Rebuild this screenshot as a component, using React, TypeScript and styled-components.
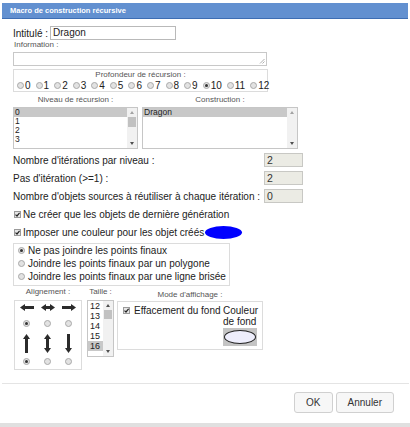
import React from "react";
import styled, { createGlobalStyle } from "styled-components";

const GlobalStyle = createGlobalStyle`
  html, body { margin: 0; padding: 0; background: #fff; }
  body { font-family: "Liberation Sans", Arial, sans-serif; color: #222; }
  * { box-sizing: border-box; }
`;

const Dialog = styled.div`
  width: 410px;
  height: 427px;
  background: #fff;
  display: flex;
  flex-direction: column;
  overflow: hidden;
`;

const TitleBar = styled.div`
  margin: 3px 2px 0 2px;
  height: 16px;
  background: #6290d0;
  border-bottom: 1px solid #3d6db3;
  color: #fff;
  font-weight: bold;
  font-size: 7.5px;
  line-height: 15px;
  padding-left: 8px;
  white-space: nowrap;
`;

const Body = styled.div`
  padding-left: 13px;
  display: flex;
  flex-direction: column;
  flex: 1;
`;

const Row = styled.div<{ $mt?: number; $h?: number; $w?: number }>`
  display: flex;
  align-items: center;
  margin-top: ${(p) => p.$mt ?? 0}px;
  height: ${(p) => (p.$h ? `${p.$h}px` : "auto")};
  width: ${(p) => (p.$w ? `${p.$w}px` : "auto")};
  font-size: 10px;
  white-space: nowrap;
`;

const MainLabel = styled.span`
  font-size: 10px;
  color: #222;
  margin-right: 2px;
`;

const TextBox = styled.div<{ $w: number; $bg?: string }>`
  width: ${(p) => p.$w}px;
  height: 14px;
  border: 1px solid #b9b9b9;
  background: ${(p) => p.$bg ?? "#fff"};
  font-size: 10px;
  line-height: 12px;
  padding-left: 2px;
  color: #222;
`;

const NumBox = styled(TextBox)`
  margin-left: auto;
  font-size: 10.5px;
  color: #333;
  border-color: #c8c8c4;
`;

const SmallLabel = styled.div<{ $center?: boolean; $pl?: number }>`
  font-size: 8px;
  line-height: 10px;
  color: #555;
  text-align: ${(p) => (p.$center ? "center" : "left")};
  padding-left: ${(p) => p.$pl ?? 0}px;
  white-space: nowrap;
`;

const TextArea = styled.div`
  position: relative;
  width: 254px;
  height: 14px;
  margin-top: 2px;
  border: 1px solid #c8c8c8;
`;

const Grip = styled.svg`
  position: absolute;
  right: 1px;
  bottom: 1px;
`;

const Group = styled.div<{ $w: number; $mt: number; $pb?: number }>`
  width: ${(p) => p.$w}px;
  margin-top: ${(p) => p.$mt}px;
  border: 1px solid #dcdcdc;
  padding-bottom: ${(p) => p.$pb ?? 0}px;
  display: flex;
  flex-direction: column;
`;

const DepthRow = styled.div`
  display: flex;
  align-items: center;
  height: 11px;
  font-size: 10px;
  color: #222;
`;

const DepthItem = styled.span`
  display: inline-flex;
  align-items: center;
  margin-right: 2px;
`;

const RadioDot = styled.span<{ $on?: boolean; $ml?: number; $mr?: number }>`
  display: inline-block;
  position: relative;
  width: 7px;
  height: 7px;
  border-radius: 50%;
  border: 1px solid #a9a9a9;
  background: #e2e2e2;
  margin-left: ${(p) => p.$ml ?? 3}px;
  margin-right: ${(p) => p.$mr ?? 1}px;
  flex: none;
  &::after {
    content: "";
    display: ${(p) => (p.$on ? "block" : "none")};
    position: absolute;
    left: 1px;
    top: 1px;
    width: 3px;
    height: 3px;
    border-radius: 50%;
    background: #333;
  }
`;

const CheckBox = styled.span`
  display: inline-flex;
  align-items: center;
  justify-content: center;
  width: 7px;
  height: 7px;
  border: 1px solid #9a9a9a;
  background: #e6e6e6;
  margin-left: 1px;
  margin-right: 2px;
  flex: none;
`;

const ListsRow = styled.div`
  display: flex;
  gap: 4px;
  margin-top: 3px;
`;

const ListColumn = styled.div<{ $w: number }>`
  width: ${(p) => p.$w}px;
  display: flex;
  flex-direction: column;
`;

const ListBox = styled.div<{ $h: number; $mt?: number }>`
  height: ${(p) => p.$h}px;
  margin-top: ${(p) => p.$mt ?? 2}px;
  border: 1px solid #c6c6c6;
  display: flex;
`;

const ListItems = styled.div<{ $fs: number; $lh: number }>`
  flex: 1;
  font-size: ${(p) => p.$fs}px;
  line-height: ${(p) => p.$lh}px;
  color: #222;
  overflow: hidden;
`;

const ListItem = styled.div<{ $sel?: boolean; $pl?: number }>`
  padding-left: ${(p) => p.$pl ?? 1}px;
  background: ${(p) => (p.$sel ? "#c8c8c8" : "transparent")};
`;

const ScrollBar = styled.div`
  width: 10px;
  background: #f1f1f1;
  display: flex;
  flex-direction: column;
  align-items: center;
`;

const ScrollArrow = styled.div<{ $dir: "up" | "down"; $dark?: boolean }>`
  height: 9px;
  width: 10px;
  display: flex;
  align-items: center;
  justify-content: center;
  &::before {
    content: "";
    width: 0;
    height: 0;
    border-left: 2.5px solid transparent;
    border-right: 2.5px solid transparent;
    ${(p) =>
      p.$dir === "up"
        ? `border-bottom: 3px solid ${p.$dark ? "#505050" : "#a3a3a3"};`
        : `border-top: 3px solid ${p.$dark ? "#505050" : "#a3a3a3"};`}
  }
`;

const ScrollThumb = styled.div<{ $h: number }>`
  width: 8px;
  height: ${(p) => p.$h}px;
  background: #c1c1c1;
`;

const Spacer = styled.div`
  flex: 1;
`;

const ColorEllipse = styled.span`
  display: inline-block;
  width: 37px;
  height: 13px;
  border-radius: 50%;
  background: #0000ff;
  margin-left: 1px;
`;

const OptionLine = styled.div`
  display: flex;
  align-items: center;
  height: 13px;
  font-size: 10px;
  color: #222;
  white-space: nowrap;
`;

const BottomSection = styled.div`
  display: flex;
  align-items: flex-start;
  margin-top: 1px;
`;

const Column = styled.div<{ $w: number; $ml: number; $pt?: number }>`
  width: ${(p) => p.$w}px;
  margin-left: ${(p) => p.$ml}px;
  padding-top: ${(p) => p.$pt ?? 0}px;
  display: flex;
  flex-direction: column;
`;

const AlignBox = styled.div`
  margin-top: 3px;
  height: 70px;
  border: 1px solid #dcdcdc;
  padding-left: 1px;
  display: grid;
  grid-template-columns: 21px 21px 21px;
  grid-template-rows: 12px 20px 20px 16px;
  justify-items: center;
  align-items: center;
`;

const ModeBox = styled.div`
  margin-top: 1px;
  height: 49px;
  border: 1px solid #dcdcdc;
  display: flex;
  padding: 3px 3px 0 5px;
`;

const ModeCheck = styled.div`
  display: flex;
  align-items: center;
  height: 11px;
  font-size: 10px;
  color: #222;
  white-space: nowrap;
  flex: 1;
  & > span:first-child {
    margin-left: 0;
    margin-right: 4px;
  }
`;

const ColourBlock = styled.div`
  width: 36px;
  display: flex;
  flex-direction: column;
  font-size: 10px;
  line-height: 11px;
  color: #222;
  white-space: nowrap;
`;

const Swatch = styled.div`
  margin-top: 1px;
  width: 34px;
  height: 18px;
  background: #c4c4c4;
  display: flex;
  align-items: center;
  justify-content: center;
`;

const SwatchEllipse = styled.span`
  width: 32px;
  height: 14px;
  border-radius: 50%;
  border: 1px solid #222;
  background: #eeeefc;
`;

const Separator = styled.div`
  margin: 12px 1px 0 2px;
  height: 1px;
  background: #e4e4e4;
`;

const Footer = styled.div`
  display: flex;
  justify-content: flex-end;
  gap: 3px;
  padding: 8px 16px 10px 0;
`;

const Button = styled.div`
  height: 21px;
  padding: 0 11px;
  border: 1px solid #d0d0d0;
  border-radius: 3px;
  background: #f7f7f7;
  font-size: 10px;
  line-height: 19px;
  color: #333;
`;

const BottomBar = styled.div`
  height: 4px;
  background: #e0e0e0;
`;

const Check = () => (
  <svg width="5" height="5" viewBox="0 0 5 5">
    <path d="M0.5 2.6 L2 4 L4.6 0.8" stroke="#222" strokeWidth="1.2" fill="none" />
  </svg>
);

const HArrow = ({ left, right }: { left: boolean; right: boolean }) => (
  <svg width="14" height="7" viewBox="0 0 14 7">
    <rect x={left ? 4 : 0} y="2" width={14 - (left ? 4 : 0) - (right ? 4 : 0)} height="3" fill="#2b2b2b" />
    {left && <polygon points="0,3.5 5,0 5,7" fill="#2b2b2b" />}
    {right && <polygon points="14,3.5 9,0 9,7" fill="#2b2b2b" />}
  </svg>
);

const VArrow = ({ up, down }: { up: boolean; down: boolean }) => (
  <svg width="7" height="19" viewBox="0 0 7 19">
    <rect x="2" y={up ? 4 : 0} width="3" height={19 - (up ? 4 : 0) - (down ? 4 : 0)} fill="#2b2b2b" />
    {up && <polygon points="3.5,0 0,5 7,5" fill="#2b2b2b" />}
    {down && <polygon points="3.5,19 0,14 7,14" fill="#2b2b2b" />}
  </svg>
);

const depths = Array.from({ length: 13 }, (_, i) => i);

export default function App() {
  return (
    <>
      <GlobalStyle />
      <Dialog>
        <TitleBar>Macro de construction récursive</TitleBar>
        <Body>
          <Row $mt={7} $h={14}>
            <MainLabel>Intitulé :</MainLabel>
            <TextBox $w={126}>Dragon</TextBox>
          </Row>
          <SmallLabel $pl={1}>Information :</SmallLabel>
          <TextArea>
            <Grip width="6" height="6" viewBox="0 0 6 6">
              <path d="M5.5 1 L1 5.5 M5.5 3.5 L3.5 5.5" stroke="#9a9a9a" strokeWidth="0.8" />
            </Grip>
          </TextArea>

          <Group $w={255} $mt={3}>
            <SmallLabel $center>Profondeur de récursion :</SmallLabel>
            <DepthRow>
              {depths.map((d) => (
                <DepthItem key={d}>
                  <RadioDot $on={d === 10} />
                  {d}
                </DepthItem>
              ))}
            </DepthRow>
          </Group>

          <ListsRow>
            <ListColumn $w={125}>
              <SmallLabel $center>Niveau de récursion :</SmallLabel>
              <ListBox $h={42}>
                <ListItems $fs={8.5} $lh={9}>
                  <ListItem $sel>0</ListItem>
                  <ListItem>1</ListItem>
                  <ListItem>2</ListItem>
                  <ListItem>3</ListItem>
                </ListItems>
                <ScrollBar>
                  <ScrollArrow $dir="up" />
                  <ScrollThumb $h={10} />
                  <Spacer />
                  <ScrollArrow $dir="down" $dark />
                </ScrollBar>
              </ListBox>
            </ListColumn>
            <ListColumn $w={156}>
              <SmallLabel $center>Construction :</SmallLabel>
              <ListBox $h={42}>
                <ListItems $fs={8.5} $lh={9}>
                  <ListItem $sel>Dragon</ListItem>
                </ListItems>
                <ScrollBar>
                  <ScrollArrow $dir="up" />
                  <Spacer />
                  <ScrollArrow $dir="down" $dark />
                </ScrollBar>
              </ListBox>
            </ListColumn>
          </ListsRow>

          <Row $mt={4} $h={14} $w={290}>
            <MainLabel>Nombre d'itérations par niveau :</MainLabel>
            <NumBox $w={39} $bg="#ebebe4">2</NumBox>
          </Row>
          <Row $mt={4} $h={14} $w={290}>
            <MainLabel>Pas d'itération (&gt;=1) :</MainLabel>
            <NumBox $w={39} $bg="#ebebe4">2</NumBox>
          </Row>
          <Row $mt={4} $h={14} $w={290}>
            <MainLabel>Nombre d'objets sources à réutiliser à chaque itération :</MainLabel>
            <NumBox $w={39} $bg="#ebebe4">0</NumBox>
          </Row>

          <Row $mt={4} $h={14}>
            <CheckBox>
              <Check />
            </CheckBox>
            Ne créer que les objets de dernière génération
          </Row>
          <Row $mt={4} $h={14}>
            <CheckBox>
              <Check />
            </CheckBox>
            Imposer une couleur pour les objet créés
            <ColorEllipse />
          </Row>

          <Group $w={217} $mt={4} $pb={2}>
            <OptionLine>
              <RadioDot $on $ml={4} $mr={3} />
              Ne pas joindre les points finaux
            </OptionLine>
            <OptionLine>
              <RadioDot $ml={4} $mr={3} />
              Joindre les points finaux par un polygone
            </OptionLine>
            <OptionLine>
              <RadioDot $ml={4} $mr={3} />
              Joindre les points finaux par une ligne brisée
            </OptionLine>
          </Group>

          <BottomSection>
            <Column $w={68} $ml={1}>
              <SmallLabel $center>Alignement :</SmallLabel>
              <AlignBox>
                <HArrow left right={false} />
                <HArrow left right />
                <HArrow left={false} right />
                <RadioDot $on $ml={0} $mr={0} />
                <RadioDot $ml={0} $mr={0} />
                <RadioDot $ml={0} $mr={0} />
                <VArrow up down={false} />
                <VArrow up down />
                <VArrow up={false} down />
                <RadioDot $on $ml={0} $mr={0} />
                <RadioDot $ml={0} $mr={0} />
                <RadioDot $ml={0} $mr={0} />
              </AlignBox>
            </Column>
            <Column $w={27} $ml={5}>
              <SmallLabel $center>Taille :</SmallLabel>
              <ListBox $h={57} $mt={3}>
                <ListItems $fs={9} $lh={10}>
                  <ListItem $pl={2}>12</ListItem>
                  <ListItem $pl={2}>13</ListItem>
                  <ListItem $pl={2}>14</ListItem>
                  <ListItem $pl={2}>15</ListItem>
                  <ListItem $pl={2} $sel>16</ListItem>
                </ListItems>
                <ScrollBar>
                  <ScrollArrow $dir="up" $dark />
                  <ScrollThumb $h={9} />
                  <Spacer />
                  <ScrollArrow $dir="down" $dark />
                </ScrollBar>
              </ListBox>
            </Column>
            <Column $w={146} $ml={3} $pt={3}>
              <SmallLabel $center>Mode d'affichage :</SmallLabel>
              <ModeBox>
                <ModeCheck>
                  <CheckBox>
                    <Check />
                  </CheckBox>
                  Effacement du fond
                </ModeCheck>
                <ColourBlock>
                  <span>Couleur</span>
                  <span>de fond</span>
                  <Swatch>
                    <SwatchEllipse />
                  </Swatch>
                </ColourBlock>
              </ModeBox>
            </Column>
          </BottomSection>
        </Body>
        <Separator />
        <Footer>
          <Button>OK</Button>
          <Button>Annuler</Button>
        </Footer>
        <BottomBar />
      </Dialog>
    </>
  );
}
